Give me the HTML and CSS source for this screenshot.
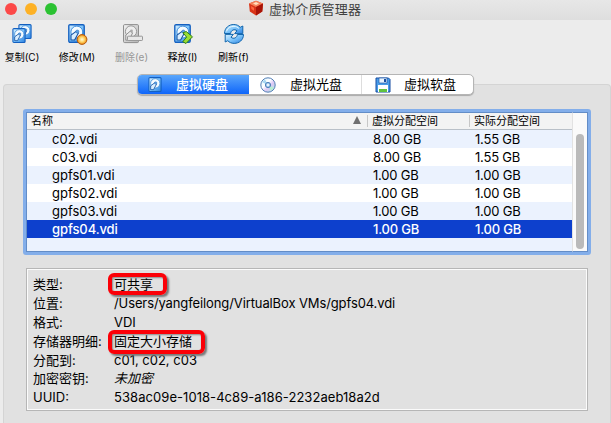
FILE: index.html
```html
<!DOCTYPE html>
<html lang="zh-CN">
<head>
<meta charset="utf-8">
<title>虚拟介质管理器</title>
<link rel="stylesheet" href="styles.css">
</head>
<body>
<svg class="defs" width="0" height="0" aria-hidden="true">
  <defs>
    <linearGradient id="blue" x1="0" y1="0" x2="1" y2="1"><stop offset="0" stop-color="#d8f0ff"/><stop offset=".5" stop-color="#7cc4fa"/><stop offset="1" stop-color="#2b80e0"/></linearGradient>
    <linearGradient id="grey" x1="0" y1="0" x2="1" y2="1"><stop offset="0" stop-color="#f2f2f2"/><stop offset="1" stop-color="#b4b4b4"/></linearGradient>
    <radialGradient id="orange"><stop offset="0" stop-color="#fffbe0"/><stop offset=".5" stop-color="#ffd76a"/><stop offset="1" stop-color="#f08a10"/></radialGradient>
    <linearGradient id="disc" x1="0" y1="0" x2="1" y2="1"><stop offset="0" stop-color="#d8f3ff"/><stop offset=".4" stop-color="#fff"/><stop offset=".6" stop-color="#ddc8f5"/><stop offset="1" stop-color="#a7eddd"/></linearGradient>
    <symbol id="drive" viewBox="0 0 16 18">
      <rect x=".7" y=".7" width="14.6" height="16.6" rx="1.2" fill="url(#blue)" stroke="#1460c0" stroke-width="1.3"/>
      <circle cx="8.3" cy="7.6" r="5.6" fill="#f4fbff" stroke="#3c8ad8" stroke-width=".9"/>
      <path d="M2.8 10.6v4.6h3.4L9.8 8.6 7.6 7Z" fill="#d9eeff" stroke="#1450a0" stroke-width="1" stroke-linejoin="round"/>
      <circle cx="8.8" cy="7.2" r="1.5" fill="#5ba3e6" stroke="#2468b8" stroke-width=".5"/>
    </symbol>
  </defs>
</svg>
<header class="titlebar">
  <div class="lights"><i class="close"></i><i class="minimize"></i><i class="expand"></i></div>
  <div class="title">
    <svg width="16" height="16" viewBox="0 0 16 16"><path d="M8 .7 15 3.5 14.3 11.5 8 15.4 1.8 11.5 1 3.5Z" fill="#d93418"/><path d="M8 .7 15 3.5 8 7 1 3.5Z" fill="#f5835b"/><path d="m5 3.4 3-1.5 3 1.5L8 5Z" fill="#ffe0bf"/><path d="M8 7v8.4l6.3-3.9.7-8Z" fill="#a81408"/><path d="m3 6 3 1.7v3L3.4 9Z" fill="#ff6740"/></svg>
    <span>虚拟介质管理器</span>
  </div>
</header>
<nav class="toolbar">
  <button class="tool copy"><svg width="22" height="22" viewBox="0 0 22 22"><use href="#drive" x="7" y="1" width="14" height="15"/><use href="#drive" x="1" y="5" width="14" height="15"/></svg><span>复制(C)</span></button>
  <button class="tool modify"><svg width="22" height="22" viewBox="0 0 22 22"><use href="#drive" x="2" y="1" width="17" height="19"/><circle cx="16" cy="16.5" r="4.9" fill="url(#orange)" stroke="#b4590c"/></svg><span>修改(M)</span></button>
  <button class="tool remove" disabled><svg width="22" height="22" viewBox="0 0 22 22"><rect x="2.5" y="1.6" width="15" height="18" rx="1.2" fill="url(#grey)" stroke="#8f8f8f"/><circle cx="10" cy="8.4" r="5.6" fill="#eee" stroke="#989898"/><path d="M4.8 12v5.2h3.4l3.4-7.4-2.4-1.6Z" fill="#e9e9e9" stroke="#8f8f8f"/><circle cx="10.5" cy="8" r="1.4" fill="#aaa"/><rect x="6.5" y="13.2" width="15" height="4.3" rx=".7" fill="#e8e8e8" stroke="#999"/></svg><span>删除(e)</span></button>
  <button class="tool release"><svg width="22" height="22" viewBox="0 0 22 22"><use href="#drive" x="2" y="1" width="17" height="19"/><path d="m11 9.8 3.2-1.3 6.3 5.3-6.5 6.7-3.2-1.8 3.8-4.6Z" fill="#9ade35" stroke="#327f16" stroke-linejoin="round"/></svg><span>释放(I)</span></button>
  <button class="tool refresh"><svg width="22" height="22" viewBox="0 0 22 22"><path d="M1.5 10.5C1.5 4.8 6 1.5 10.8 1.5c2.8 0 5 1.1 6.4 2.8L19.8 3v7.6h-8.2L14 7.8C11.5 5.6 8 7 7.6 10.5Z" fill="url(#blue)" stroke="#1266ad"/><path d="M20.5 11.5c0 5.6-4.5 8.9-9.3 8.9-2.8 0-5-1.1-6.4-2.7L2.2 19v-7.6h8.2L8 14.2c2.5 2.2 6 .8 6.4-2.7Z" fill="url(#blue)" stroke="#1266ad"/><path d="M3.4 8.4C4.5 4.8 7.6 3.2 11 3.3c2 0 3.9 1 5 2.2" stroke="#e8faff" fill="none"/></svg><span>刷新(f)</span></button>
</nav>
<main class="pane">
  <div class="tabs">
    <div class="tab active"><svg width="14" height="15"><use href="#drive" width="14" height="15"/></svg><span>虚拟硬盘</span></div>
    <div class="tab optical"><svg width="16" height="16" viewBox="0 0 16 16"><circle cx="8" cy="8" r="7.2" fill="url(#disc)" stroke="#527db4"/><path d="m8 8-5.8-2.7A6.5 6.5 0 0 1 5 2.5Z" fill="#a8d7f2"/><path d="m8 8 5.8 2.7a6.5 6.5 0 0 1-3 2.8Z" fill="#b6f0d0"/><circle cx="8" cy="8" r="2.6" fill="#a7cdef" stroke="#4b7eb9"/><circle cx="8" cy="8" r="1" fill="#fff"/></svg><span>虚拟光盘</span></div>
    <div class="tab floppy"><svg width="16" height="16" viewBox="0 0 16 16"><path d="M1 1h12.5L15 2.5V15H1Z" fill="#4a9de8" stroke="#174da1"/><path d="M4 1h8v5H4Z" fill="#e8f4ff" stroke="#245ca9" stroke-width=".7"/><path d="M9 2h2v3H9Z" fill="#174da1"/><path d="M3 8h10v7H3Z" fill="#fff"/><path d="M4 12h8v3H4Z" fill="#5fc340"/></svg><span>虚拟软盘</span></div>
  </div>
  <section class="table">
    <div class="grid">
      <div class="row head"><span class="name">名称<i class="sort"></i></span><span>虚拟分配空间</span><span>实际分配空间</span></div>
      <div class="row"><span>c02.vdi</span><span>8.00 GB</span><span>1.55 GB</span></div>
      <div class="row"><span>c03.vdi</span><span>8.00 GB</span><span>1.55 GB</span></div>
      <div class="row"><span>gpfs01.vdi</span><span>1.00 GB</span><span>1.00 GB</span></div>
      <div class="row"><span>gpfs02.vdi</span><span>1.00 GB</span><span>1.00 GB</span></div>
      <div class="row"><span>gpfs03.vdi</span><span>1.00 GB</span><span>1.00 GB</span></div>
      <div class="row selected"><span>gpfs04.vdi</span><span>1.00 GB</span><span>1.00 GB</span></div>
      <div class="row blank"></div>
    </div>
    <div class="scrollbar"><i></i></div>
  </section>
  <dl class="details">
    <dt>类型:</dt><dd><span class="mark short">可共享</span></dd>
    <dt>位置:</dt><dd class="path">/Users/yangfeilong/VirtualBox VMs/gpfs04.vdi</dd>
    <dt>格式:</dt><dd>VDI</dd>
    <dt>存储器明细:</dt><dd><span class="mark long">固定大小存储</span></dd>
    <dt>分配到:</dt><dd>c01, c02, c03</dd>
    <dt>加密密钥:</dt><dd class="italic">未加密</dd>
    <dt>UUID:</dt><dd class="uuid">538ac09e-1018-4c89-a186-2232aeb18a2d</dd>
  </dl>
</main>
</body>
</html>
```
FILE: styles.css
```css
*, *::after { box-sizing: border-box; }
body { margin: 0; width: 611px; height: 423px; overflow: hidden; background: #ececec; color: #000; font: 13px/18px Inter, "Noto Sans CJK SC", sans-serif; display: flex; flex-direction: column; }
svg { display: block; flex: none; overflow: visible; }
.defs { position: absolute; }
.titlebar { height: 20px; flex: none; background: linear-gradient(#e7e7e7, #dedede); display: grid; grid-template-columns: 248px 1fr; }
.lights { display: flex; gap: 8px; padding: 3px 0 0 5px; }
.lights i { width: 12px; height: 12px; border-radius: 50%; }
.close { background: #fc4948; }
.minimize { background: #fdb125; }
.expand { background: #2bc232; }
.title { display: flex; gap: 5px; color: #404040; line-height: 18px; letter-spacing: .15px; }
.toolbar { height: 64px; flex: none; display: flex; align-items: flex-start; padding-top: 3px; }
.tool { border: 0; padding: 0; background: none; color: #000; font: 10px/16px Inter, "Noto Sans CJK SC", sans-serif; display: flex; flex-direction: column; align-items: center; gap: 1px; white-space: nowrap; }
.tool span { margin-top: 3px; }
.tool.copy { width: 44px; }
.tool.modify { width: 66px; }
.tool.remove { width: 43px; }
.tool.release { width: 59px; }
.tool.refresh { width: 43px; }
.tool:disabled { color: #969696; }
.pane { flex: 1; margin: 0 0 0 3px; border: 1px solid #d4d4d4; border-width: 1px 1px 0; border-radius: 4px 4px 0 0; background: #e1e1e1; }
.tabs { width: 337px; height: 21px; margin: -11px 0 0 133px; display: flex; border: 1px solid #b5b5b5; border-radius: 5px; background: #fff; box-shadow: 0 1px 1px #aaa; overflow: hidden; line-height: 17px; }
.tab { display: flex; align-items: center; flex: none; width: 112px; padding-left: 11px; gap: 13px; }
.tab.active { margin: -1px 0 -1px -1px; color: #fff; font-weight: 500; background: linear-gradient(#5eaafb, #0b62fa); gap: 14px; }
.tab.optical { border-right: 1px solid #ddd; gap: 14px; width: 113px; padding-left: 11px; }
.tab.floppy { padding-left: 13px; }
.table { width: 568px; height: 146px; margin: 14px 0 0 19px; border: 3px solid #83aeea; border-radius: 3px; display: flex; background: #fff; }
.grid { width: 546px; border: solid #638dc7; border-width: 1px 0 1px 1px; }
.row { display: grid; grid-template-columns: 341px 102px 1fr; height: 18px; line-height: 18px; }
.row:nth-child(even) { background: #ebf2fe; }
.row > span { padding-left: 5px; white-space: nowrap; letter-spacing: -.2px; }
.row > span:first-child { padding-left: 25px; letter-spacing: 0; }
.row.head { height: 17px; line-height: 16px; background: #f3f3f3; border-bottom: 1px solid #b9c0c8; font-size: 11px; }
.row.head > span { height: 12px; margin-top: 2px; padding-left: 4px; line-height: 12px; letter-spacing: 0; border-right: 1px solid #c7c7c7; }
.row.head > span:last-child { border: 0; }
.row.head > .name { display: flex; justify-content: space-between; padding: 0 6px 0 4px; }
.sort { width: 0; height: 0; margin-top: 1px; border: solid transparent; border-width: 0 4.5px 8px; border-bottom-color: #707070; }
.row.selected { color: #fff; background: #0d40cd; font-weight: 500; }
.row.selected > span { letter-spacing: -.22px; }
.row.selected > span:first-child { letter-spacing: -.1px; }
.row.blank { height: 13px; background: #ebf2fe; }
.scrollbar { flex: 1; border: 1px solid #638dc7; border-left-color: #e2e2e2; background: #fafafa; padding: 21px 0 0 3px; }
.scrollbar i { display: block; width: 8px; height: 115px; border-radius: 4px; background: #bababa; }
.details { width: 562px; height: 143px; margin: 13px 0 0 22px; padding: 6px 0 0 6px; border: 1px solid #b6b6b6; outline: 1px solid #fbfbfb; outline-offset: -2px; display: grid; grid-template-columns: 81px 1fr; grid-auto-rows: 18.9px; line-height: 19px; align-content: start; }
.details dt, .details dd { margin: 0; white-space: nowrap; }
.details .path { letter-spacing: -.11px; }
.details .uuid { letter-spacing: .06px; }
.mark { position: relative; }
.mark::after { content: ""; position: absolute; left: -6px; top: -3px; height: 22px; width: 59px; border: 4px solid #fb0007; border-radius: 6px; box-shadow: 2px 2px 2px #777, inset 1px 1px 2px #888; }
.mark.long::after { width: 97px; height: 24px; }
.italic { font-style: italic; }
```
